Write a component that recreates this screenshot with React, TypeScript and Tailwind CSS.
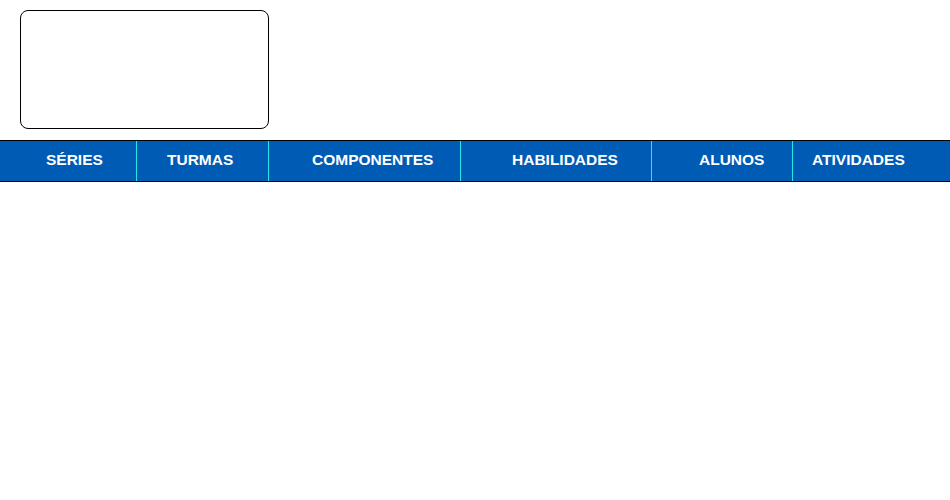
const items = [
  { label: "SÉRIES", cls: "w-[137px] pl-[46px] border-r" },
  { label: "TURMAS", cls: "w-[132px] pl-[30px] border-r" },
  { label: "COMPONENTES", cls: "w-[192px] pl-[43px] border-r" },
  { label: "HABILIDADES", cls: "w-[191px] pl-[51px] border-r" },
  { label: "ALUNOS", cls: "w-[141px] pl-[47px] border-r" },
  { label: "ATIVIDADES", cls: "flex-1 pl-[19px]" },
];

export default function App() {
  return (
    <div className="min-h-[500px] bg-white font-['Liberation_Sans',Arial,sans-serif]">
      <header className="pt-[10px] pl-[20px] pb-[11px]">
        <div className="w-[249px] h-[119px] rounded-[8px] border border-black" />
      </header>
      <nav className="flex h-[42px] bg-[#005bb5] border-y border-black">
        {items.map((item) => (
          <a
            key={item.label}
            href="#"
            className={`${item.cls} flex items-center pb-[2px] border-[#22e6ee] text-white text-[15.5px] font-bold leading-none`}
          >
            {item.label}
          </a>
        ))}
      </nav>
    </div>
  );
}
